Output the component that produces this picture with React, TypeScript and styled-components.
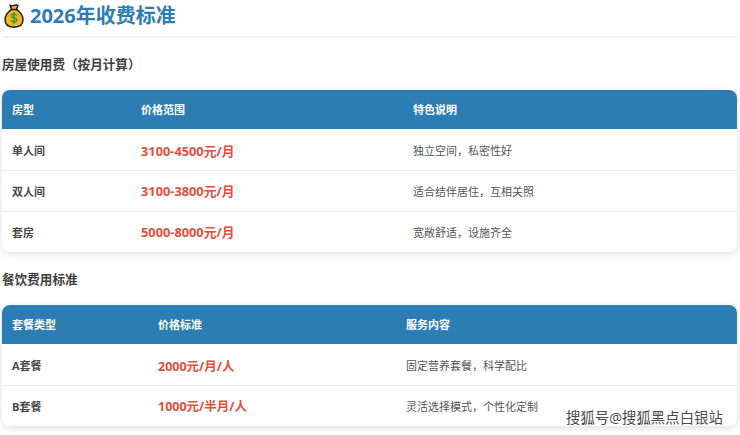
import React from 'react'
import styled, { createGlobalStyle } from 'styled-components'

const GlobalStyle = createGlobalStyle`
  html, body {
    margin: 0;
    padding: 0;
    background: #fff;
  }
  body {
    font-family: "Open Sans", "Noto Sans CJK SC", sans-serif;
    color: #444;
  }
`

const Page = styled.main`
  position: relative;
  width: 740px;
  height: 435px;
  overflow: hidden;
  box-sizing: border-box;
  padding: 0 3px 0 2px;
`

const TitleBar = styled.header`
  display: flex;
  align-items: center;
  gap: 6px;
  height: 38px;
  box-sizing: border-box;
  padding: 0 0 4px 2px;
  border-bottom: 2px solid #edf3f8;
`

const TitleText = styled.h1`
  margin: 0;
  font-size: 20px;
  line-height: 30px;
  font-weight: 700;
  color: #2c7db3;
`

const SectionTitle = styled.h2<{ $top: number; $bottom: number }>`
  margin: ${p => p.$top}px 0 ${p => p.$bottom}px;
  font-size: 12.6px;
  line-height: 18px;
  font-weight: 700;
  color: #3f3f3f;
`

const TableCard = styled.div`
  border-radius: 8px;
  overflow: hidden;
  background: #fff;
  box-shadow: 0 2px 8px rgba(0, 0, 0, 0.13);
`

const Table = styled.table`
  width: 735px;
  border-collapse: collapse;
  table-layout: fixed;
`

const HeadCell = styled.th`
  height: 39px;
  padding: 0 10px 2px;
  box-sizing: border-box;
  background: #2c7db3;
  color: #fff;
  font-size: 11px;
  font-weight: 700;
  text-align: left;
`

const Row = styled.tr`
  &:first-child td {
    padding-top: 2px;
  }
  & + & td {
    border-top: 1px solid #ececec;
  }
`

const NameCell = styled.td`
  height: 41px;
  padding: 0 10px;
  box-sizing: border-box;
  font-size: 11px;
  font-weight: 700;
  color: #484848;
`

const PriceCell = styled.td<{ $size: number }>`
  padding: 0 10px;
  font-size: ${p => p.$size}px;
  font-weight: 700;
  color: #e74c3c;
`

const NoteCell = styled.td`
  padding: 0 10px;
  font-size: 11px;
  font-weight: 400;
  color: #555;
`

const Watermark = styled.div`
  position: absolute;
  left: 566px;
  top: 409px;
  font-size: 14.4px;
  line-height: 18px;
  white-space: nowrap;
  color: #4a4a4a;
  text-shadow: -1px 0 0 #fff;
`

const MoneyBag = () => (
  <svg width="20" height="24" viewBox="0 0 20 24" aria-hidden="true">
    <path
      d="M6 1.2c1.2.8 2.6.8 4 .2 1.3-.5 2.8-.5 4-.1l-1.6 4.1c2.900 2 6.600 5.800 6.600 10.400 0 5-3.800 7.400-9 7.400s-9-2.400-9-7.400c0-4.600 3.700-8.400 6.600-10.400z"
      fill="#f5b324"
      stroke="#1d1a12"
      strokeWidth="1.400"
      strokeLinejoin="round"
    />
    <path d="M6.800 5.600h6.400" stroke="#1d1a12" strokeWidth="1.500" strokeLinecap="round" />
    <path
      d="M12.600 11.300c-.6-.9-1.500-1.300-2.600-1.300-1.500 0-2.600.8-2.600 2 0 2.700 5.400 1.400 5.400 4.100 0 1.200-1.200 2-2.800 2-1.200 0-2.200-.5-2.800-1.400M10 8.500v11"
      fill="none"
      stroke="#2f9e2f"
      strokeWidth="1.500"
      strokeLinecap="round"
    />
  </svg>
)

type FeeRow = { name: string; price: string; note: string }

const roomRows: FeeRow[] = [
  { name: '单人间', price: '3100-4500元/月', note: '独立空间，私密性好' },
  { name: '双人间', price: '3100-3800元/月', note: '适合结伴居住，互相关照' },
  { name: '套房', price: '5000-8000元/月', note: '宽敞舒适，设施齐全' },
]

const mealRows: FeeRow[] = [
  { name: 'A套餐', price: '2000元/月/人', note: '固定营养套餐，科学配比' },
  { name: 'B套餐', price: '1000元/半月/人', note: '灵活选择模式，个性化定制' },
]

const FeeTable = ({
  heads,
  widths,
  rows,
  priceSize,
}: {
  heads: string[]
  widths: number[]
  rows: FeeRow[]
  priceSize: number
}) => (
  <TableCard>
    <Table>
      <colgroup>
        {widths.map((w, i) => (
          <col key={i} style={{ width: w }} />
        ))}
      </colgroup>
      <thead>
        <tr>
          {heads.map(h => (
            <HeadCell key={h}>{h}</HeadCell>
          ))}
        </tr>
      </thead>
      <tbody>
        {rows.map(r => (
          <Row key={r.name}>
            <NameCell>{r.name}</NameCell>
            <PriceCell $size={priceSize}>{r.price}</PriceCell>
            <NoteCell>{r.note}</NoteCell>
          </Row>
        ))}
      </tbody>
    </Table>
  </TableCard>
)

export default function App() {
  return (
    <Page>
      <GlobalStyle />
      <TitleBar>
        <MoneyBag />
        <TitleText>2026年收费标准</TitleText>
      </TitleBar>
      <SectionTitle $top={18} $bottom={16}>房屋使用费（按月计算）</SectionTitle>
      <FeeTable heads={['房型', '价格范围', '特色说明']} widths={[129, 272, 334]} rows={roomRows} priceSize={12.8} />
      <SectionTitle $top={19} $bottom={16}>餐饮费用标准</SectionTitle>
      <FeeTable heads={['套餐类型', '价格标准', '服务内容']} widths={[146, 248, 341]} rows={mealRows} priceSize={12.5} />
      <Watermark>搜狐号@搜狐黑点白银站</Watermark>
    </Page>
  )
}
